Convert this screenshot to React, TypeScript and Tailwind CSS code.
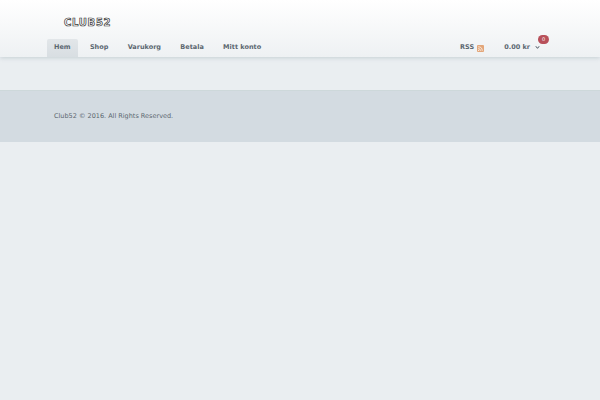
export default function App() {
  const items = ["Hem", "Shop", "Varukorg", "Betala", "Mitt konto"];
  return (
    <div className="min-h-[400px] bg-[#eaeef1] font-['DejaVu_Sans',sans-serif]">
      <header className="h-[57px] bg-gradient-to-b from-white to-[#eef1f3] shadow-[0_1px_4px_rgba(120,140,150,0.3)] px-[47px] flex flex-col">
        <div className="h-[39px] pl-[17px] pt-[16px]">
          <span className="block opacity-90 text-[10px] leading-[14px] font-bold tracking-[0.7px] text-white [-webkit-text-stroke:0.7px_#222]">CLUB52</span>
        </div>
        <div className="flex items-start justify-between pr-[4px]">
          <nav className="flex">
            {items.map((t, i) => (
              <a key={t} className={`h-[18px] flex items-center px-[7px] text-[6.5px] font-bold text-[#5b6770] mr-[5.3px] rounded-t-[2px] ${i === 0 ? "bg-gradient-to-b from-[#e2e6e9] to-[#d8dee2]" : ""}`}>{t}</a>
            ))}
          </nav>
          <div className="flex items-center h-[17px] text-[6.5px] font-bold text-[#5b6770] mr-[9px]">
            <span>RSS</span>
            <span className="ml-[3px] w-[7px] h-[7px] rounded-[1px] bg-[#e3a679] mt-[1px] flex items-center justify-center">
              <svg viewBox="0 0 6 6" className="w-[7px] h-[7px]"><path d="M1 1.5a3.5 3.5 0 0 1 3.5 3.5M1 3a2 2 0 0 1 2 2" stroke="#fff" strokeWidth="0.6" fill="none"/><circle cx="1.4" cy="4.6" r="0.5" fill="#fff"/></svg>
            </span>
            <span className="ml-[20px]">0.00 kr</span>
            <span className="relative ml-[5px] w-[5px] h-[5px]">
              <svg viewBox="0 0 6 6" className="w-[5px] h-[5px]"><path d="M1 1.5 3 4l2-2.5" stroke="#4a5560" strokeWidth="1.2" fill="none"/></svg>
              <span className="absolute left-[3px] top-[-10px] w-[11px] h-[9px] rounded-full bg-[#b8505a] text-white text-[5px] font-normal flex items-center justify-center">0</span>
            </span>
          </div>
        </div>
      </header>
      <div className="h-[33px]" />
      <footer className="h-[52px] bg-[#d3dbe1] border-t border-[#cdd8da] pl-[54px] pt-[1px] flex items-center text-[6.5px] text-[#5b6770]">
        Club52 © 2016. All Rights Reserved.
      </footer>
    </div>
  );
}
